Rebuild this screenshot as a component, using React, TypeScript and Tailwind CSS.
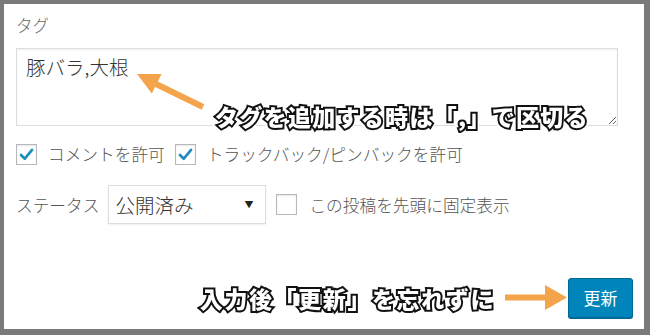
import React from "react";

const jp = { fontFamily: '"Noto Sans CJK JP", "Noto Sans", sans-serif' };

const outline =
  "[-webkit-text-stroke:4px_#111] [paint-order:stroke_fill] [filter:drop-shadow(1.5px_0_0_#fff)_drop-shadow(-1.5px_0_0_#fff)_drop-shadow(0_1.5px_0_#fff)_drop-shadow(0_-1.5px_0_#fff)]";

function Check({ checked }: { checked: boolean }) {
  return (
    <div className="w-[21px] h-[21px] border border-[#b4b9be] bg-white shadow-[inset_0_1px_2px_rgba(0,0,0,0.1)] flex items-center justify-center">
      {checked && (
        <svg width="17" height="17" viewBox="0 0 20 20">
          <path d="M3.5 10.5 L8 15 L16.5 4.5" fill="none" stroke="#1e8cbe" strokeWidth="3.2" strokeLinecap="round" strokeLinejoin="round" />
        </svg>
      )}
    </div>
  );
}

export default function App() {
  return (
    <div className="w-[650px] h-[335px] bg-[#7a7a7a] pt-[4px] pl-[4px] pr-[6px] pb-[6px]" style={jp}>
      <div className="relative h-full bg-white flex flex-col pl-[12px] pr-[11px]">
        <div className="pt-[9px] text-[16.5px] leading-[24px] text-[#666] font-light">タグ</div>
        <textarea
          readOnly
          defaultValue="豚バラ,大根"
          className="mt-[11px] w-[602px] h-[78px] border border-[#ddd] shadow-[inset_0_1px_2px_rgba(0,0,0,0.07)] pl-[9px] pr-[8px] py-[5px] text-[19.5px] leading-[26px] text-[#333] outline-none font-light"
          style={jp}
        />
        <div className="mt-[17px] flex items-center text-[16.7px] text-[#555] leading-[22px] font-light">
          <Check checked />
          <span className="ml-[11px]">コメントを許可</span>
          <div className="ml-[10px]"><Check checked /></div>
          <span className="ml-[11px]">トラックバック/ピンバックを許可</span>
        </div>
        <div className="mt-[20px] flex items-center text-[16.7px] text-[#555] leading-[22px] font-light">
          <span>ステータス</span>
          <div className="ml-[9px] w-[158px] h-[39px] border border-[#ddd] shadow-[0_1px_2px_rgba(0,0,0,0.07)] flex items-center justify-between pl-[6px] pr-[12px]">
            <span className="text-[19.5px] text-[#333]">公開済み</span>
            <span className="text-[9px] text-[#222]">▼</span>
          </div>
          <div className="ml-[10px]"><Check checked={false} /></div>
          <span className="ml-[12px]">この投稿を先頭に固定表示</span>
        </div>
        <div className="mt-auto pb-[11px] flex items-center justify-end">
          <span className={"text-[23px] leading-[28px] font-black text-white tracking-[1.6px] " + outline}>
            入力後「更新」を忘れずに
          </span>
          <svg width="62" height="26" viewBox="0 0 62 26" className="ml-[10px]">
            <line x1="0" y1="12.5" x2="42" y2="12.5" stroke="#f4a44a" strokeWidth="6" />
            <polygon points="40,0 62,12.5 40,25" fill="#f4a44a" />
          </svg>
          <div className="ml-[1px] w-[65px] h-[40px] rounded-[3px] bg-[#0085ba] border border-[#006799] shadow-[0_1px_0_#006799] flex items-center justify-center text-white text-[17px]">
            更新
          </div>
        </div>

        <svg width="80" height="50" viewBox="130 65 80 50" className="absolute left-[126px] top-[61px]">
          <line x1="154" y1="83" x2="203" y2="107" stroke="#f4a44a" strokeWidth="6" />
          <polygon points="137,74 151.8,93.6 161.6,74" fill="#f4a44a" />
        </svg>
        <div className={"absolute left-[211px] top-[98px] text-[23px] leading-[28px] font-black text-white tracking-[1.3px] whitespace-nowrap " + outline}>
          タグを追加する時は「,」で区切る
        </div>
      </div>
    </div>
  );
}
